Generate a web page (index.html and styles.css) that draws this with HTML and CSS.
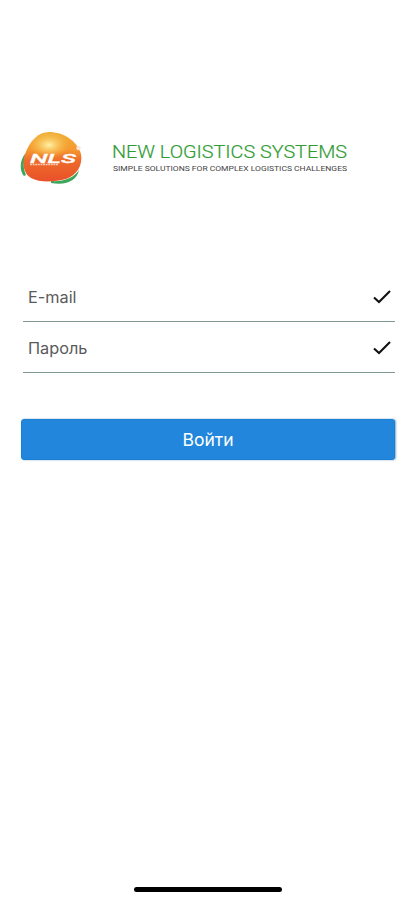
FILE: index.html
```html
<!DOCTYPE html>
<html lang="ru">
<head>
  <meta charset="UTF-8">
  <meta name="viewport" content="width=device-width, initial-scale=1">
  <title>New Logistics Systems</title>
  <link rel="stylesheet" href="styles.css">
</head>
<body>
  <header>
    <svg class="logo" viewBox="0 0 64 56" width="64" height="56">
      <defs>
        <linearGradient id="ball" x1="0" y1="0" x2="0" y2="1">
          <stop offset="0" stop-color="#efb03a"/>
          <stop offset=".35" stop-color="#f59a30"/>
          <stop offset=".58" stop-color="#ee6a2b"/>
          <stop offset="1" stop-color="#e9512a"/>
        </linearGradient>
        <radialGradient id="shine" cx=".5" cy=".5" r=".5">
          <stop offset="0" stop-color="#fff3a8"/>
          <stop offset="1" stop-color="#f9c94a" stop-opacity="0"/>
        </radialGradient>
      </defs>
      <path d="M5 25C0 31 -1 41 4 47L6 46C3 39 3 33 6 27Z" fill="#3da65a"/>
      <path d="M31 52C43 53 54 49 59 41C57 51 47 57 31 54Z" fill="#3da65a"/>
      <path d="M5 25C10 12 18 3 29 3C44 3 57 12 61 25C63 36 57 46 46 50C35 53 20 54 11 49C3 44 2 34 5 25Z" fill="url(#ball)"/>
      <ellipse cx="29" cy="16" rx="20" ry="13" fill="url(#shine)"/>
      <text class="logo-text" x="10" y="33.5" textLength="46" lengthAdjust="spacingAndGlyphs">NLS</text>
      <path d="M10 35.5H38" stroke="#f9c9ae" stroke-width="1.5" stroke-dasharray="2 .6"/>
      <circle cx="58.5" cy="19" r="2.2" fill="#fbe3da"/>
    </svg>
    <svg class="brand" viewBox="0 0 236 30" width="236" height="30">
      <text class="brand-name" x="0" y="16" textLength="235" lengthAdjust="spacingAndGlyphs">NEW LOGISTICS SYSTEMS</text>
      <text class="brand-sub" x="1" y="29" textLength="234" lengthAdjust="spacingAndGlyphs">SIMPLE SOLUTIONS FOR COMPLEX LOGISTICS CHALLENGES</text>
    </svg>
  </header>
  <main>
    <div class="field">
      <span>E-mail</span>
      <svg class="check" viewBox="0 0 20 16" width="20" height="16"><path d="M2 8.5L7 13L18 2"/></svg>
    </div>
    <div class="field">
      <span>Пароль</span>
      <svg class="check" viewBox="0 0 20 16" width="20" height="16"><path d="M2 8.5L7 13L18 2"/></svg>
    </div>
    <button>Войти</button>
  </main>
  <div class="home-bar"></div>
</body>
</html>
```

FILE: styles.css
```css
* { box-sizing: border-box; }
body {
  margin: 0;
  height: 900px;
  display: flex;
  flex-direction: column;
  background: #fff;
  font-family: Inter, "Liberation Sans", sans-serif;
}
header { display: flex; align-items: flex-start; padding: 129px 20px 0; height: 271px; }
.logo { flex: none; }
.brand { flex: none; margin: 13px 0 0 28px; overflow: visible; }
.logo-text { font: italic 500 13px Roboto, sans-serif; fill: #fff; stroke: #fff; stroke-width: .3; }
.brand-name { font: 300 19px Roboto, sans-serif; fill: #2f9c33; stroke: #2f9c33; stroke-width: .2; }
.brand-sub { font: 8px Roboto, sans-serif; fill: #444; }

main { flex: 1; padding: 0 20px 0 21px; }
.field {
  display: flex;
  align-items: center;
  justify-content: space-between;
  height: 51px;
  margin: 0 0 0 2px;
  padding: 1px 3px 0 5px;
  border-bottom: 1px solid #7f9990;
  color: #5a5a5a;
  font-size: 16.3px;
}
.check { fill: none; stroke: #111; stroke-width: 2.1; }
button {
  display: block;
  width: 374px;
  height: 41px;
  margin-top: 46px;
  padding: 0;
  border: 1px solid #1d7fd0;
  border-radius: 3px;
  background: #2287dc;
  box-shadow: 1px 0 2px #7fa9cc;
  color: #fff;
  font: 17.5px Inter, sans-serif;
}
.home-bar { width: 148px; height: 5px; margin: 0 0 8px 134px; border-radius: 3px; background: #000; }
```
